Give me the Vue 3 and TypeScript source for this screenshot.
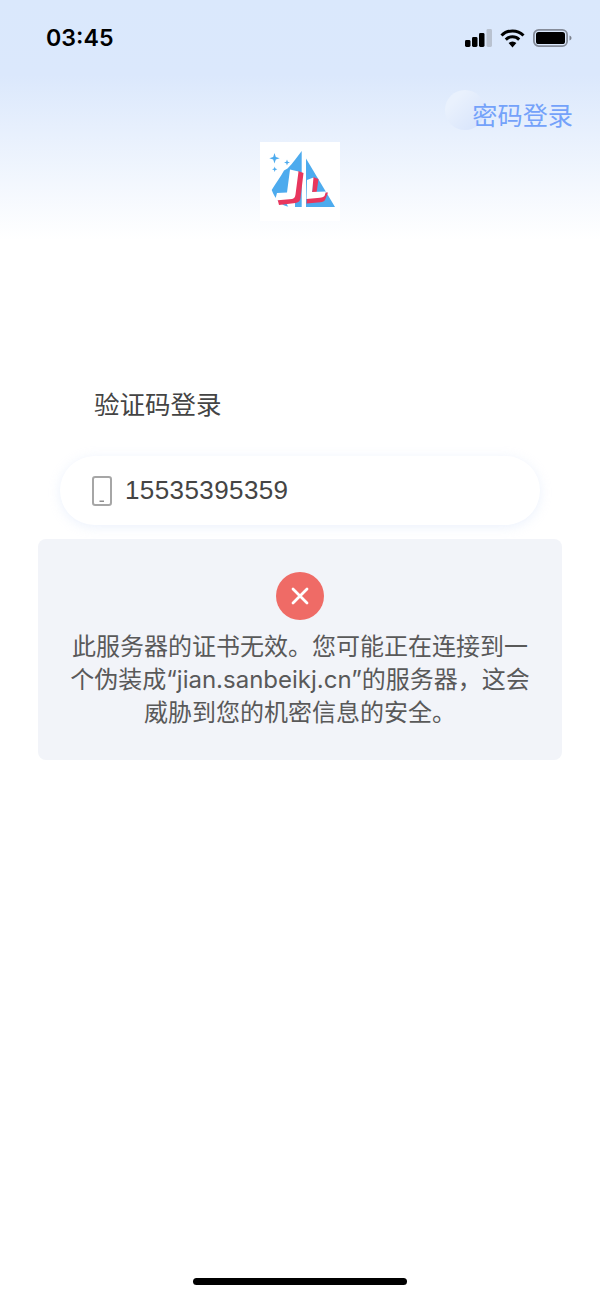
<script setup lang="ts">
const phone: string = '15535395359'
const lines: string[] = [
  '此服务器的证书无效。您可能正在连接到一',
  '个伪装成“jian.sanbeikj.cn”的服务器，这会',
  '威胁到您的机密信息的安全。',
]
</script>

<template>
  <div class="page">
    <header class="status">
      <span class="time">03:45</span>
      <div class="status-icons">
        <svg width="27" height="18" viewBox="0 0 27 18">
          <rect x="0" y="11" width="5.5" height="7" rx="1.4" fill="#000" />
          <rect x="7" y="8" width="5.5" height="10" rx="1.4" fill="#000" />
          <rect x="14" y="4" width="5.5" height="14" rx="1.4" fill="#000" />
          <rect x="21.5" y="0" width="5.5" height="18" rx="1.4" fill="#b9c2d0" />
        </svg>
        <svg width="25" height="19" viewBox="0 0 25 19">
          <path d="M1.5 6.5a15.5 15.5 0 0 1 22 0" fill="none" stroke="#000" stroke-width="3" />
          <path d="M5.8 10.6a9.5 9.5 0 0 1 13.4 0" fill="none" stroke="#000" stroke-width="3" />
          <path d="M8.6 14l3.9 4.6 3.9-4.6a5.6 5.6 0 0 0-7.8 0z" fill="#000" />
        </svg>
        <svg width="39" height="18" viewBox="0 0 39 18">
          <rect x="0.9" y="0.9" width="33.2" height="16.2" rx="4.8" fill="none" stroke="#858c99" stroke-width="1.8" />
          <rect x="3" y="3" width="29" height="12" rx="2.6" fill="#000" />
          <path d="M36.5 6.5c1.4.4 2 1.3 2 2.5s-.6 2.1-2 2.5z" fill="#7c828d" />
        </svg>
      </div>
    </header>

    <div class="switch-row">
      <div class="switch">
        <span class="switch-blob"></span>
        <span class="switch-label">密码登录</span>
      </div>
    </div>

    <div class="logo">
      <svg width="80" height="79" viewBox="0 0 80 79">
        <rect width="80" height="79" fill="#fff" />
        <path d="M41.7 9V65H30C21 64 15 57 11.7 48C16 41 21 34 24 28.5L27.5 26.5C33 21 38 14 41.7 9Z" fill="#4dabee" />
        <path d="M46 16.5L75 65H46Z" fill="#4dabee" />
        <path d="M14.5 11l1.3 3.9 3.9 1.3-3.9 1.3-1.3 3.9-1.3-3.9-3.9-1.3 3.9-1.3z" fill="#4dabee" />
        <path d="M27 17.5l.8 2.2 2.2.8-2.2.8-.8 2.2-.8-2.2-2.2-.8 2.2-.8z" fill="#4dabee" />
        <path d="M14.7 24.5l.7 2 2 .7-2 .7-.7 2-.7-2-2-.7 2-.7z" fill="#4dabee" />
        <path d="M26 60H35V69H30Z" fill="#fff" />
        <path d="M38 29L43.5 31L40.5 56C40 59.5 38 60.5 35.5 61L19 63L17.5 57L34 55Z" fill="#e8365d" />
        <path d="M30 27.5L38.5 29.5L35.5 52.5C35 55.5 34 56.5 32 57L15 58.5L17 51L27 50.5Z" fill="#fff" />
        <path d="M53 35L58.5 37L56.5 51L68 50.5L65 58C64 59.5 62.5 60 60.5 60.2L46.5 61.5L47 55L52 54Z" fill="#e8365d" />
        <path d="M47 38L53.5 35.5L52 50L66 49.5L64.5 54C63 55.5 62 55.5 60 55.7L46.5 57Z" fill="#fff" />
      </svg>
    </div>

    <h1 class="title">验证码登录</h1>

    <div class="field">
      <svg width="20" height="30" viewBox="0 0 20 30">
        <rect x="1" y="1" width="18" height="28" rx="2.2" fill="none" stroke="#a6a6a6" stroke-width="2" />
        <rect x="7.5" y="24.5" width="4.5" height="1.5" fill="#8f8f8f" />
      </svg>
      <span class="phone">{{ phone }}</span>
    </div>

    <div class="toast">
      <div class="toast-icon">
        <svg width="20" height="20" viewBox="0 0 20 20">
          <path d="M3 3L17 17M17 3L3 17" fill="none" stroke="#fff" stroke-width="2.8" stroke-linecap="round" />
        </svg>
      </div>
      <p class="toast-text">
        <span v-for="line in lines" :key="line" class="toast-line">{{ line }}</span>
      </p>
    </div>

    <div class="home-bar"></div>
  </div>
</template>

<style>
html,
body {
  margin: 0;
  background: #fff;
}
</style>

<style scoped>
.page {
  width: 600px;
  height: 1298px;
  box-sizing: border-box;
  overflow: hidden;
  display: flex;
  flex-direction: column;
  background: linear-gradient(180deg, #dae8fc 0, #dbe8fc 75px, #fff 240px);
  font-family: "Noto Sans CJK SC", "Noto Sans", sans-serif;
}
.status {
  height: 76px;
  box-sizing: border-box;
  padding: 0 28px 0 46px;
  display: flex;
  align-items: center;
  justify-content: space-between;
}
.time {
  font-family: Inter, "Liberation Sans", sans-serif;
  font-size: 23.2px;
  font-weight: 600;
  color: #000;
}
.status-icons {
  display: flex;
  align-items: center;
  gap: 8px;
}
.switch-row {
  display: flex;
  justify-content: flex-end;
  padding-right: 27px;
  height: 66px;
}
.switch {
  position: relative;
  height: 62px;
  display: flex;
  align-items: flex-end;
}
.switch-blob {
  position: absolute;
  left: -27px;
  top: 14px;
  width: 40px;
  height: 40px;
  border-radius: 50%;
  background: linear-gradient(135deg, #e9f1fd 25%, #d6e3fb);
}
.switch-label {
  position: relative;
  font-size: 25.2px;
  line-height: 48px;
  color: #74a2fa;
}
.logo {
  align-self: center;
  width: 80px;
  height: 79px;
}
.logo svg {
  display: block;
}
.title {
  margin: 162px 0 0 94px;
  font-size: 25.5px;
  font-weight: 400;
  line-height: 40px;
  color: #444;
}
.field {
  margin: 33px 60px 0;
  height: 69px;
  box-sizing: border-box;
  padding-left: 32px;
  display: flex;
  align-items: center;
  gap: 13px;
  border-radius: 35px;
  background: #fff;
  box-shadow: 0 2px 12px rgba(190, 210, 245, 0.3);
}
.phone {
  font-family: "Liberation Sans", sans-serif;
  font-size: 26px;
  color: #444;
  letter-spacing: 0.4px;
}
.toast {
  margin: 14px 38px 0;
  height: 221px;
  box-sizing: border-box;
  padding-top: 33px;
  display: flex;
  flex-direction: column;
  align-items: center;
  border-radius: 8px;
  background: #f2f4f9;
}
.toast-icon {
  width: 48px;
  height: 48px;
  border-radius: 50%;
  background: #ef6b66;
  display: flex;
  align-items: center;
  justify-content: center;
}
.toast-text {
  margin: 10px 0 0;
  text-align: center;
  font-family: Inter, "Noto Sans CJK SC", sans-serif;
  font-size: 24px;
  line-height: 33px;
  color: #595959;
}
.toast-line {
  display: block;
  white-space: nowrap;
}
.home-bar {
  margin-top: auto;
  margin-bottom: 13px;
  align-self: center;
  width: 214px;
  height: 7px;
  border-radius: 4px;
  background: #000;
}
</style>
